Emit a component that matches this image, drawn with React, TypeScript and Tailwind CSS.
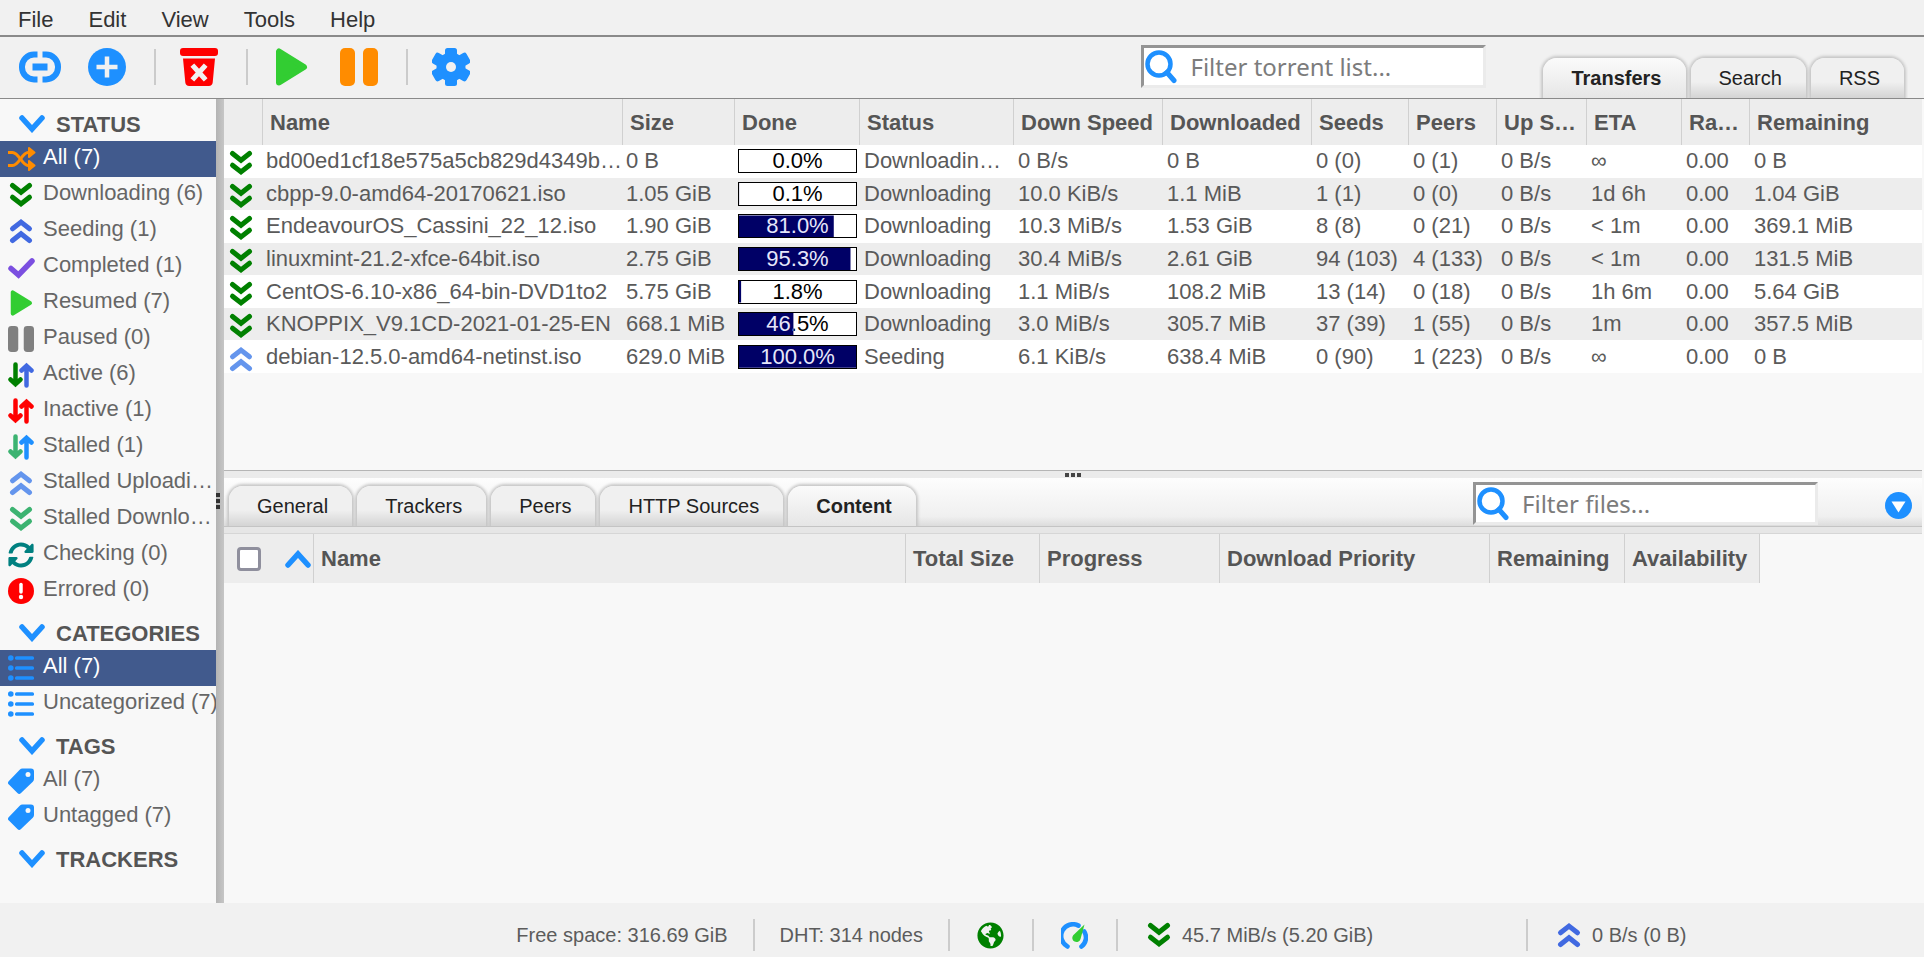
import React from "react";
import { FaGlobeAmericas, FaSyncAlt } from "react-icons/fa";

const DODGER = "#1e90ff";

function DoubleChevron({ color, up = false, size = 26 }: { color: string; up?: boolean; size?: number }) {
  return (
    <svg width={size} height={size} viewBox="0 0 26 26" className="block shrink-0" aria-hidden="true">
      <g fill="none" stroke={color} strokeWidth="5" strokeLinecap="round" transform={up ? "rotate(180 13 13)" : undefined}>
        <path d="M4.5 3.5 13 10.2 21.5 3.5" />
        <path d="M4.5 15.2 13 21.9 21.5 15.2" />
      </g>
    </svg>
  );
}

function Chevron({ up = false }: { up?: boolean }) {
  return (
    <svg width="26" height="18" viewBox="0 0 26 18" className="block shrink-0" aria-hidden="true">
      <path
        d="M3 3 13 14 23 3"
        fill="none"
        stroke={DODGER}
        strokeWidth="5.5"
        strokeLinecap="round"
        transform={up ? "rotate(180 13 9)" : undefined}
      />
    </svg>
  );
}

function LinkIcon() {
  return (
    <svg width="42" height="38" viewBox="0 0 42 38" aria-hidden="true">
      <g fill="none" stroke={DODGER} strokeWidth="6">
        <path d="M18.5 6.5H15A12 12 0 0 0 3 18.5v1A12 12 0 0 0 15 31.5h3.5" />
        <path d="M23.5 6.5H27A12 12 0 0 1 39 18.5v1A12 12 0 0 1 27 31.5h-3.5" />
      </g>
      <rect x="13.5" y="15.5" width="15" height="7" fill={DODGER} />
    </svg>
  );
}

function PlusCircle() {
  return (
    <svg width="38" height="38" viewBox="0 0 38 38" aria-hidden="true">
      <circle cx="19" cy="19" r="19" fill={DODGER} />
      <path d="M19 8.5v21M8.5 19h21" stroke="#f1f1f1" strokeWidth="4.5" />
    </svg>
  );
}

function TrashIcon() {
  return (
    <svg width="38" height="38" viewBox="0 0 38 38" aria-hidden="true">
      <rect width="38" height="8" rx="3" fill="#f00" />
      <path d="M3 10.5h32l-2.3 24a4 4 0 0 1-4 3.5H9.3a4 4 0 0 1-4-3.5z" fill="#f00" />
      <path d="m14 19 10 11M24 19 14 30" stroke="#f1f1f1" strokeWidth="5" strokeLinecap="square" />
    </svg>
  );
}

function PlayIcon({ size }: { size: number }) {
  return (
    <svg width={size} height={size} viewBox="0 0 38 38" className="block shrink-0" aria-hidden="true">
      <path d="M7 3.5v31L32 19z" fill="#32cd32" stroke="#32cd32" strokeWidth="6" strokeLinejoin="round" />
    </svg>
  );
}

function PauseIcon({ size, color }: { size: number; color: string }) {
  return (
    <svg width={size} height={size} viewBox="0 0 38 38" className="block shrink-0" aria-hidden="true">
      <rect width="15" height="38" rx="5" fill={color} />
      <rect x="23" width="15" height="38" rx="5" fill={color} />
    </svg>
  );
}

function GearIcon() {
  return (
    <svg width="38" height="38" viewBox="0 0 38 38" aria-hidden="true">
      <g fill={DODGER}>
        <circle cx="19" cy="19" r="14.5" />
        <rect x="13" y="0" width="12" height="38" rx="2.5" />
        <rect x="13" y="-1" width="12" height="40" rx="2.5" transform="rotate(60 19 19)" />
        <rect x="13" y="-1" width="12" height="40" rx="2.5" transform="rotate(120 19 19)" />
      </g>
      <circle cx="19" cy="19" r="5" fill="#f1f1f1" />
    </svg>
  );
}

function ShuffleIcon() {
  return (
    <svg width="28" height="26" viewBox="0 0 28 26" className="block shrink-0" aria-hidden="true">
      <g fill="none" stroke="#ff8c00" strokeWidth="3">
        <path d="M0 6.5h4.5C11 6.5 14 19.5 20 19.5h3" />
        <path d="M0 19.5h4.5C11 19.5 14 6.5 20 6.5h3" />
      </g>
      <g fill="#ff8c00" stroke="#ff8c00" strokeWidth="2" strokeLinejoin="round">
        <path d="m21 2 5.5 4.5L21 11z" />
        <path d="m21 15 5.5 4.5L21 24z" />
      </g>
    </svg>
  );
}

function CheckIcon() {
  return (
    <svg width="27" height="26" viewBox="0 0 27 26" className="block shrink-0" aria-hidden="true">
      <path d="m3 14.500 7.500 6.500L24 7" fill="none" stroke="#7b4fe0" strokeWidth="5.500" strokeLinecap="round" />
    </svg>
  );
}

function UpDownIcon({ down, up }: { down: string; up: string }) {
  return (
    <svg width="26" height="26" viewBox="0 0 26 26" className="block shrink-0" aria-hidden="true">
      <g fill="none" strokeWidth="4.5" strokeLinecap="round">
        <path d="M7.5 2.5V22M2.5 17.5l5 4.700 5-4.700" stroke={down} />
        <path d="M18.5 23.5V4M13.5 8.5l5-4.700 5 4.700" stroke={up} />
      </g>
    </svg>
  );
}

function ErrorIcon() {
  return (
    <svg width="26" height="26" viewBox="0 0 26 26" className="block shrink-0" aria-hidden="true">
      <circle cx="13" cy="13" r="13" fill="#f00" />
      <path d="M13 6.5v7.5" stroke="#fff" strokeWidth="3.5" strokeLinecap="round" />
      <circle cx="13" cy="19" r="2.2" fill="#fff" />
    </svg>
  );
}

function ListIcon() {
  return (
    <svg width="26" height="26" viewBox="0 0 26 26" className="block shrink-0" aria-hidden="true">
      <g fill={DODGER}>
        <circle cx="2.8" cy="3" r="2.8" />
        <circle cx="2.8" cy="13" r="2.8" />
        <circle cx="2.8" cy="23" r="2.8" />
        <rect x="7" y="1.2" width="19" height="3.6" rx="1.5" />
        <rect x="7" y="11.2" width="19" height="3.6" rx="1.5" />
        <rect x="7" y="21.2" width="19" height="3.6" rx="1.5" />
      </g>
    </svg>
  );
}

function TagIcon() {
  return (
    <svg width="26" height="26" viewBox="0 0 26 26" className="block shrink-0" aria-hidden="true">
      <path
        fillRule="evenodd"
        fill={DODGER}
        d="M14.5.5H23A3 3 0 0 1 26 3.5V11a4 4 0 0 1-1.2 2.8L13 25a2.500 2.500 0 0 1-3.600 0L.9 16.600a2.500 2.500 0 0 1 0-3.600L11.700 1.700A4 4 0 0 1 14.500.5zM20 4a2.500 2.500 0 1 0 0 5 2.500 2.500 0 0 0 0-5z"
      />
    </svg>
  );
}

function GaugeIcon() {
  return (
    <svg width="27" height="27" viewBox="0 0 27 27" className="block" aria-hidden="true">
      <path
        d="M6.500 24.500A11.200 11.200 0 0 1 17.500 3.600M23.200 9.500A11.200 11.200 0 0 1 20.500 24.500"
        fill="none"
        stroke={DODGER}
        strokeWidth="4.6"
        strokeLinecap="round"
      />
      <path d="M23.5 2.500 19.500 17a4.200 4.200 0 1 1-7.300-3.800z" fill="#32cd32" />
    </svg>
  );
}

function SearchIcon() {
  return (
    <svg width="32" height="34" viewBox="0 0 32 34" className="pointer-events-none absolute top-[5px] left-[4px]" aria-hidden="true">
      <circle cx="14" cy="14" r="11.500" fill="none" stroke={DODGER} strokeWidth="4.5" />
      <path d="m22 22.500 7 8" stroke={DODGER} strokeWidth="5" strokeLinecap="round" />
    </svg>
  );
}

function FilterBox({ label }: { label: string }) {
  return (
    <div className="relative w-[345px]">
      <input
        type="text"
        aria-label={label}
        placeholder={label}
        className="block h-[43px] w-full border-3 border-t-[#949494] border-r-[#ebebeb] border-b-[#ebebeb] border-l-[#949494] bg-white pr-2 pb-px pl-[46px] font-['Noto_Sans',sans-serif] text-2xl leading-8 text-[#333] outline-none placeholder:text-[#7c7c7c]"
      />
      <SearchIcon />
    </div>
  );
}

function Tab({ label, active = false }: { label: string; active?: boolean }) {
  const base = "h-10 rounded-t-[14px] pr-6 pl-7 text-xl leading-10 text-[#222] shadow-[0_0_3px_2px_#c6c6c6]";
  return (
    <button
      type="button"
      role="tab"
      aria-selected={active}
      className={
        active
          ? `${base} bg-linear-to-b from-[#fbfbfb] to-[#e6e6e6] font-bold`
          : `${base} bg-linear-to-b from-[#f0f0f0] from-60% to-[#d4d4d4]`
      }
    >
      {label}
    </button>
  );
}

type FilterItem = { label: string; icon: React.ReactNode; selected?: boolean };

const statusFilters: FilterItem[] = [
  { label: "All (7)", icon: <ShuffleIcon />, selected: true },
  { label: "Downloading (6)", icon: <DoubleChevron color="#008000" /> },
  { label: "Seeding (1)", icon: <DoubleChevron color="#4169e1" up /> },
  { label: "Completed (1)", icon: <CheckIcon /> },
  { label: "Resumed (7)", icon: <PlayIcon size={26} /> },
  { label: "Paused (0)", icon: <PauseIcon size={26} color="#808080" /> },
  { label: "Active (6)", icon: <UpDownIcon down="#008000" up="#4169e1" /> },
  { label: "Inactive (1)", icon: <UpDownIcon down="#ff0000" up="#ff0000" /> },
  { label: "Stalled (1)", icon: <UpDownIcon down="#3cb371" up="#1e90ff" /> },
  { label: "Stalled Uploadi…", icon: <DoubleChevron color="#6495ed" up /> },
  { label: "Stalled Downlo…", icon: <DoubleChevron color="#3cb371" /> },
  { label: "Checking (0)", icon: <FaSyncAlt size={26} color="#008080" className="shrink-0" /> },
  { label: "Errored (0)", icon: <ErrorIcon /> },
];

const sections: { title: string; items: FilterItem[] }[] = [
  { title: "STATUS", items: statusFilters },
  {
    title: "CATEGORIES",
    items: [
      { label: "All (7)", icon: <ListIcon />, selected: true },
      { label: "Uncategorized (7)", icon: <ListIcon /> },
    ],
  },
  {
    title: "TAGS",
    items: [
      { label: "All (7)", icon: <TagIcon /> },
      { label: "Untagged (7)", icon: <TagIcon /> },
    ],
  },
  { title: "TRACKERS", items: [] },
];

const torrentColumns = [
  { label: "", width: "w-[39px]" },
  { label: "Name", width: "w-[360px]" },
  { label: "Size", width: "w-[112px]" },
  { label: "Done", width: "w-[125px]" },
  { label: "Status", width: "w-[154px]" },
  { label: "Down Speed", width: "w-[149px]" },
  { label: "Downloaded", width: "w-[149px]" },
  { label: "Seeds", width: "w-[97px]" },
  { label: "Peers", width: "w-[88px]" },
  { label: "Up S…", width: "w-[90px]" },
  { label: "ETA", width: "w-[95px]" },
  { label: "Ra…", width: "w-[68px]" },
  { label: "Remaining", width: "" },
];

type Torrent = {
  name: string;
  size: string;
  done: number;
  rest: string[];
  seeding?: boolean;
};

const torrents: Torrent[] = [
  { name: "bd00ed1cf18e575a5cb829d4349b…", size: "0 B", done: 0, rest: ["Downloadin…", "0 B/s", "0 B", "0 (0)", "0 (1)", "0 B/s", "∞", "0.00", "0 B"] },
  { name: "cbpp-9.0-amd64-20170621.iso", size: "1.05 GiB", done: 0.1, rest: ["Downloading", "10.0 KiB/s", "1.1 MiB", "1 (1)", "0 (0)", "0 B/s", "1d 6h", "0.00", "1.04 GiB"] },
  { name: "EndeavourOS_Cassini_22_12.iso", size: "1.90 GiB", done: 81, rest: ["Downloading", "10.3 MiB/s", "1.53 GiB", "8 (8)", "0 (21)", "0 B/s", "< 1m", "0.00", "369.1 MiB"] },
  { name: "linuxmint-21.2-xfce-64bit.iso", size: "2.75 GiB", done: 95.3, rest: ["Downloading", "30.4 MiB/s", "2.61 GiB", "94 (103)", "4 (133)", "0 B/s", "< 1m", "0.00", "131.5 MiB"] },
  { name: "CentOS-6.10-x86_64-bin-DVD1to2", size: "5.75 GiB", done: 1.8, rest: ["Downloading", "1.1 MiB/s", "108.2 MiB", "13 (14)", "0 (18)", "0 B/s", "1h 6m", "0.00", "5.64 GiB"] },
  { name: "KNOPPIX_V9.1CD-2021-01-25-EN", size: "668.1 MiB", done: 46.5, rest: ["Downloading", "3.0 MiB/s", "305.7 MiB", "37 (39)", "1 (55)", "0 B/s", "1m", "0.00", "357.5 MiB"] },
  { name: "debian-12.5.0-amd64-netinst.iso", size: "629.0 MiB", done: 100, seeding: true, rest: ["Seeding", "6.1 KiB/s", "638.4 MiB", "0 (90)", "1 (223)", "0 B/s", "∞", "0.00", "0 B"] },
];

function ProgressBar({ value }: { value: number }) {
  const text = `${value.toFixed(1)}%`;
  return (
    <div className="relative h-6 w-[119px] border border-black bg-white text-center leading-[22px] text-black">
      {text}
      <div
        className="absolute inset-0 bg-[#000066] text-[#e6e6fa]"
        style={{ clipPath: `inset(0 ${100 - value}% 0 0)` }}
        aria-hidden="true"
      >
        {text}
      </div>
    </div>
  );
}

function TorrentTable() {
  return (
    <table className="h-[274px] w-full table-fixed border-separate border-spacing-0 text-left text-[22px] leading-7 text-[#5a5a5a]">
      <thead>
        <tr className="h-[46px] bg-[#ededed] text-[#555]">
          {torrentColumns.map((c, i) => (
            <th
              key={i}
              scope="col"
              className={`${c.width} border-r border-[#d0d0d0] p-0 pb-2 pl-[7px] align-bottom font-bold whitespace-nowrap last:border-r-0`}
            >
              {c.label}
            </th>
          ))}
        </tr>
      </thead>
      <tbody>
        {torrents.map((t) => (
          <tr key={t.name} className="bg-white even:bg-[#ededed]">
            <td className="p-0 pt-1 pl-1">
              <DoubleChevron color={t.seeding ? "#6495ed" : "#008000"} up={t.seeding} />
            </td>
            <td className="p-0 pl-[3px] whitespace-nowrap">{t.name}</td>
            <td className="p-0 pl-[3px] whitespace-nowrap">{t.size}</td>
            <td className="p-0 pl-[3px]">
              <ProgressBar value={t.done} />
            </td>
            {t.rest.map((value, i) => (
              <td key={i} className="p-0 pl-1 whitespace-nowrap">
                {value}
              </td>
            ))}
          </tr>
        ))}
      </tbody>
    </table>
  );
}

const fileColumns = [
  { label: "Name", width: "w-[592px]" },
  { label: "Total Size", width: "w-[134px]" },
  { label: "Progress", width: "w-[180px]" },
  { label: "Download Priority", width: "w-[270px]" },
  { label: "Remaining", width: "w-[135px]" },
  { label: "Availability", width: "w-[135px]" },
];

function ToolbarDivider({ className }: { className: string }) {
  return <div className={`h-9 w-0.5 bg-[#cbcbcb] ${className}`} />;
}

function StatusCell({ children, className = "" }: { children: React.ReactNode; className?: string }) {
  return <div className={`flex h-8 items-center border-l-2 border-[#cccccc] ${className}`}>{children}</div>;
}

export default function App() {
  return (
    <div className="flex min-h-screen flex-col bg-[#f1f1f1] font-['Liberation_Sans',Arial,sans-serif] text-[#333]">
      <nav className="flex h-[35px] items-center gap-[35px] pt-1 pl-[18px] text-[22px] leading-8" aria-label="Main menu">
        {["File", "Edit", "View", "Tools", "Help"].map((m) => (
          <button key={m} type="button">
            {m}
          </button>
        ))}
      </nav>

      <header className="flex h-16 border-t-2 border-b border-t-[#8a8a8a] border-b-[#8a8a8a]">
        <div className="flex items-center pb-px pl-[19px]">
          <button type="button" aria-label="Add torrent link"><LinkIcon /></button>
          <button type="button" aria-label="Add torrent file" className="ml-[27px]"><PlusCircle /></button>
          <ToolbarDivider className="ml-7" />
          <button type="button" aria-label="Remove" className="ml-6"><TrashIcon /></button>
          <ToolbarDivider className="ml-7" />
          <button type="button" aria-label="Resume" className="ml-6"><PlayIcon size={38} /></button>
          <button type="button" aria-label="Pause" className="ml-[30px]"><PauseIcon size={38} color="#ff8c00" /></button>
          <ToolbarDivider className="ml-7" />
          <button type="button" aria-label="Options" className="ml-6"><GearIcon /></button>
        </div>
        <div className="ml-auto flex pr-5">
          <div className="mr-[57px] pt-2">
            <FilterBox label="Filter torrent list..." />
          </div>
          <div className="-mx-1 flex items-end gap-[5px] overflow-hidden px-1" role="tablist">
            <Tab label="Transfers" active />
            <Tab label="Search" />
            <Tab label="RSS" />
          </div>
        </div>
      </header>

      <div className="flex flex-1">
        <aside className="w-[216px] shrink-0 bg-[#f8f8f8] pt-px text-[22px] leading-7">
          {sections.map((s) => (
            <section key={s.title}>
              <h2 className="flex h-[41px] items-end gap-[11px] pl-[19px] font-bold text-[#555]">
                <span className="pb-2"><Chevron /></span>
                <span className="pb-[2px]">{s.title}</span>
              </h2>
              <ul>
                {s.items.map((f) => (
                  <li
                    key={f.label}
                    className={
                      f.selected
                        ? "flex h-9 items-center bg-[#415a8d] pl-2 text-white"
                        : "flex h-9 items-center pl-2 text-[#666]"
                    }
                  >
                    <span className="flex w-[35px] shrink-0">{f.icon}</span>
                    <span className="pb-1 whitespace-nowrap">{f.label}</span>
                  </li>
                ))}
              </ul>
            </section>
          ))}
        </aside>

        <div className="flex w-2 shrink-0 flex-col items-start justify-center gap-0.5 bg-linear-to-r from-[#b4b4b4] to-[#c6c6c6]">
          <i className="size-1 bg-[#333]" />
          <i className="size-1 bg-[#333]" />
          <i className="size-1 bg-[#333]" />
        </div>

        <main className="flex min-w-0 flex-1 flex-col bg-[#f8f8f8] pr-0.5">
          <div className="h-[371px]">
            <TorrentTable />
          </div>

          <div className="flex h-2 items-center justify-center gap-0.5 border-t border-[#b5b5b5] bg-[#ebebeb]">
            <i className="size-1 bg-[#444]" />
            <i className="size-1 bg-[#444]" />
            <i className="size-1 bg-[#444]" />
          </div>

          <div className="flex h-[49px] border-b border-[#c4c4c4] bg-linear-to-b from-[#fdfdfd] via-[#f0f0f0] via-80% to-[#dcdcdc]">
            <div className="flex items-end gap-[5px] overflow-hidden pl-[5px]" role="tablist">
              <Tab label="General" />
              <Tab label="Trackers" />
              <Tab label="Peers" />
              <Tab label="HTTP Sources" />
              <Tab label="Content" active />
              <span className="w-1" />
            </div>
            <div className="ml-auto flex items-start pt-1 pr-[10px]">
              <FilterBox label="Filter files..." />
              <button type="button" aria-label="Collapse panel" className="mt-[10px] ml-[67px]">
                <svg width="27" height="27" viewBox="0 0 27 27" className="block" aria-hidden="true">
                  <circle cx="13.5" cy="13.5" r="13.5" fill={DODGER} />
                  <path d="M6.5 9.500h14l-7 11z" fill="#fff" />
                </svg>
              </button>
            </div>
          </div>
          <div className="h-[7px] border-b border-[#d6d6d6] bg-[#e6e6e6]" />

          <div className="flex-1">
            <table className="w-[1536px] table-fixed border-separate border-spacing-0 text-left text-[22px] leading-7 text-[#555]">
              <thead>
                <tr className="h-[49px] bg-[#ededed]">
                  <th scope="col" className="w-[90px] border-r border-[#d0d0d0] p-0">
                    <div className="flex items-center justify-between pr-[2px] pl-[13px]">
                      <input
                        type="checkbox"
                        aria-label="Select all files"
                        className="size-6 appearance-none rounded-[4px] border-3 border-[#8f8f9d] bg-white"
                      />
                      <Chevron up />
                    </div>
                  </th>
                  {fileColumns.map((c) => (
                    <th key={c.label} scope="col" className={`${c.width} border-r border-[#d0d0d0] p-0 pl-[7px] font-bold whitespace-nowrap`}>
                      {c.label}
                    </th>
                  ))}
                </tr>
              </thead>
            </table>
          </div>
        </main>
      </div>

      <footer className="flex h-[54px] items-center justify-end pt-[10px] text-xl leading-6 text-[#5c5c5c]">
        <div className="pr-[25px]">Free space: 316.69 GiB</div>
        <StatusCell className="px-[25px]">DHT: 314 nodes</StatusCell>
        <StatusCell className="pr-7 pl-[27px]">
          <FaGlobeAmericas size={27} color="#008000" />
        </StatusCell>
        <StatusCell className="pr-7 pl-[27px]">
          <GaugeIcon />
        </StatusCell>
        <StatusCell className="w-[410px] gap-[10px] pl-7">
          <DoubleChevron color="#008000" />
          45.7 MiB/s (5.20 GiB)
        </StatusCell>
        <StatusCell className="w-[398px] gap-[10px] pl-7">
          <DoubleChevron color="#4169e1" up />
          0 B/s (0 B)
        </StatusCell>
      </footer>
    </div>
  );
}
